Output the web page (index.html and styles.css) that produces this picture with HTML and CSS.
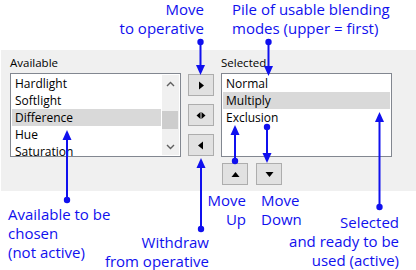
FILE: index.html
```html
<!DOCTYPE html>
<html>
<head>
  <title>Blending modes</title>
  <link rel="stylesheet" href="styles.css">
</head>
<body>
  <div class="panel">
    <div class="col">
      <div class="caption">Available</div>
      <div class="list">
        <div class="items">
          <div class="item">Hardlight</div>
          <div class="item">Softlight</div>
          <div class="item selected">Difference</div>
          <div class="item">Hue</div>
          <div class="item">Saturation</div>
        </div>
        <div class="scrollbar">
          <div class="sb-btn">
            <svg width="9" height="6" viewBox="0 0 9 6"><path d="M1 5 L4.5 1.5 L8 5" fill="none" stroke="#606060" stroke-width="1.4"/></svg>
          </div>
          <div class="sb-track"><div class="sb-thumb"></div></div>
          <div class="sb-btn">
            <svg width="9" height="6" viewBox="0 0 9 6"><path d="M1 1 L4.5 4.5 L8 1" fill="none" stroke="#606060" stroke-width="1.4"/></svg>
          </div>
        </div>
      </div>
    </div>

    <div class="mid">
      <button class="btn">
        <svg width="8" height="9" viewBox="0 0 8 9"><path d="M2 0.5 L7 4.5 L2 8.5 Z" fill="#000"/></svg>
      </button>
      <button class="btn">
        <svg width="10" height="9" viewBox="0 0 10 9"><path d="M4.5 1 L4.5 8 L0.5 4.5 Z M5.5 1 L9.5 4.5 L5.5 8 Z" fill="#000"/></svg>
      </button>
      <button class="btn">
        <svg width="8" height="9" viewBox="0 0 8 9"><path d="M6 0.5 L1 4.5 L6 8.5 Z" fill="#000"/></svg>
      </button>
    </div>

    <div class="col">
      <div class="caption">Selected</div>
      <div class="list">
        <div class="items">
          <div class="item">Normal</div>
          <div class="item selected">Multiply</div>
          <div class="item">Exclusion</div>
        </div>
      </div>
      <div class="order">
        <button class="btn">
          <svg width="9" height="7" viewBox="0 0 9 7"><path d="M0.5 6 L4.5 1 L8.5 6 Z" fill="#000"/></svg>
        </button>
        <button class="btn">
          <svg width="9" height="7" viewBox="0 0 9 7"><path d="M0.5 1 L8.5 1 L4.5 6 Z" fill="#000"/></svg>
        </button>
      </div>
    </div>
  </div>

  <!-- annotations -->
  <div class="note note-move">Move<br>to operative</div>
  <div class="note note-pile">Pile of usable blending<br>modes (upper = first)</div>
  <div class="note note-avail">Available to be<br>chosen<br>(not active)</div>
  <div class="note note-withdraw">Withdraw<br>from operative</div>
  <div class="note note-up">Move<br>Up</div>
  <div class="note note-down">Move<br>Down</div>
  <div class="note note-selected">Selected<br>and ready to be<br>used (active)</div>

  <svg class="arrows" width="416" height="270" viewBox="0 0 416 270">
    <g stroke="#1010ee" stroke-width="2" fill="none">
      <line x1="200.5" y1="42" x2="200.5" y2="67"/>
      <line x1="268.5" y1="42" x2="268.5" y2="68"/>
      <line x1="67" y1="200" x2="67" y2="138"/>
      <line x1="201" y1="229" x2="201" y2="166"/>
      <line x1="235" y1="161" x2="235" y2="133"/>
      <line x1="267" y1="127" x2="267" y2="155"/>
      <line x1="379.5" y1="207" x2="379.5" y2="120"/>
    </g>
    <g fill="#1010ee">
      <circle cx="200.5" cy="42" r="3.2"/>
      <circle cx="268.5" cy="42" r="3.2"/>
      <circle cx="67" cy="200" r="3.2"/>
      <circle cx="201" cy="229" r="3.2"/>
      <circle cx="235" cy="161" r="3.2"/>
      <circle cx="267" cy="127" r="3.2"/>
      <circle cx="379.5" cy="207" r="3.2"/>
      <polygon points="196,65 205,65 200.5,75"/>
      <polygon points="264,66 273,66 268.5,76"/>
      <polygon points="62.5,140 71.5,140 67,130"/>
      <polygon points="196.5,168 205.5,168 201,158"/>
      <polygon points="230.5,135 239.5,135 235,125"/>
      <polygon points="262.5,153 271.5,153 267,163"/>
      <polygon points="375,122 384,122 379.5,112"/>
    </g>
  </svg>
</body>
</html>
```

FILE: styles.css
```css
body {
  margin: 0;
  width: 416px;
  height: 270px;
  position: relative;
  background-color: #fff;
  font-family: "Open Sans", "Noto Sans", sans-serif;
  overflow: hidden;
}
.panel {
  margin: 50px 0 0 1px;
  height: 141px;
  padding: 5px 0 0 9px;
  box-sizing: border-box;
  background-color: #f0f0f0;
  display: flex;
  gap: 7px;
}
.col {
  width: 171px;
}
.caption {
  height: 18px;
  line-height: 16px;
  font-size: 11.5px;
  color: #000;
}
.list {
  height: 84px;
  box-sizing: border-box;
  border: 1px solid #828790;
  background-color: #fff;
  padding: 1px;
  display: flex;
  gap: 1px;
  overflow: hidden;
}
.items {
  flex: 1;
}
.item {
  height: 17px;
  line-height: 17px;
  padding-left: 3px;
  font-size: 12px;
  color: #000;
  white-space: nowrap;
}
.item.selected {
  background-color: #d9d9d9;
}
.scrollbar {
  width: 17px;
  display: flex;
  flex-direction: column;
  background-color: #f0f0f0;
}
.sb-btn {
  height: 17px;
  display: flex;
  align-items: center;
  justify-content: center;
}
.sb-track {
  flex: 1;
  padding-top: 19px;
}
.sb-thumb {
  height: 18px;
  margin: 0 1px 0 0;
  background-color: #cdcdcd;
}
.btn {
  width: 26px;
  height: 22px;
  padding: 0;
  border: 1px solid #adadad;
  background-color: #e1e1e1;
  display: flex;
  align-items: center;
  justify-content: center;
}
.mid {
  display: flex;
  flex-direction: column;
  gap: 8px;
  padding-top: 19px;
}
.order {
  display: flex;
  gap: 8px;
  margin-top: 6px;
  padding-left: 1px;
}
.note {
  position: absolute;
  font-size: 15px;
  line-height: 19px;
  color: #1010ee;
  white-space: nowrap;
}
.note-move {
  top: 0;
  right: 212px;
  text-align: right;
}
.note-pile {
  top: 0;
  left: 232px;
}
.note-avail {
  top: 205px;
  left: 8px;
}
.note-withdraw {
  top: 233px;
  right: 207px;
  text-align: right;
}
.note-up {
  top: 191px;
  right: 170px;
  text-align: right;
}
.note-down {
  top: 191px;
  left: 261px;
}
.note-selected {
  top: 213px;
  right: 17px;
  text-align: right;
}
.arrows {
  position: absolute;
  left: 0;
  top: 0;
  pointer-events: none;
}
```
